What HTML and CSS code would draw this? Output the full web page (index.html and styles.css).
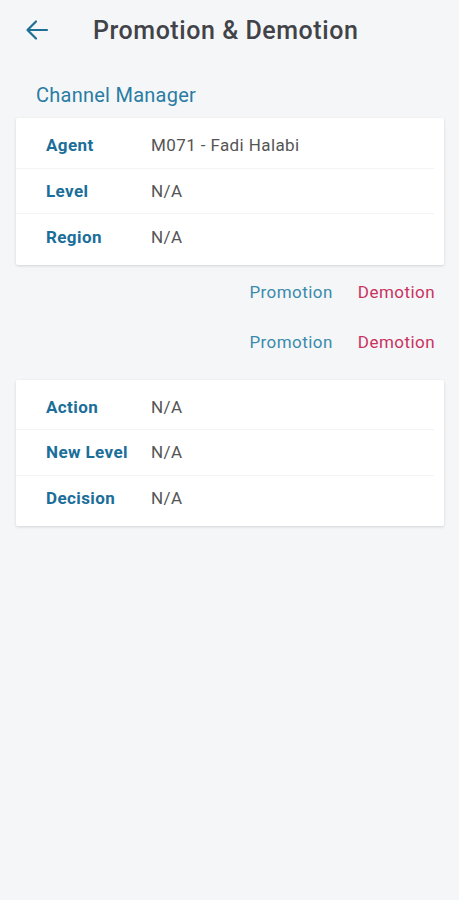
FILE: index.html
```html
<!DOCTYPE html>
<html>
<head>
<meta charset="utf-8">
<link rel="stylesheet" href="styles.css">
</head>
<body>
<div class="app">
  <header class="topbar">
    <svg class="back" width="24" height="24" viewBox="0 0 24 24"><path d="M22 12H3M11 3.5L2.5 12L11 20.5" fill="none" stroke="#1e6f96" stroke-width="2.2" stroke-linecap="round" stroke-linejoin="round"/></svg>
    <h1 class="title">Promotion &amp; Demotion</h1>
  </header>
  <div class="section-title">Channel Manager</div>
  <div class="card">
    <div class="row"><span class="label">Agent</span><span class="value">M071 - Fadi Halabi</span></div>
    <div class="row"><span class="label">Level</span><span class="value">N/A</span></div>
    <div class="row"><span class="label">Region</span><span class="value">N/A</span></div>
  </div>
  <div class="actions">
    <div class="action-row"><span class="btn promo">Promotion</span><span class="btn demo">Demotion</span></div>
    <div class="action-row"><span class="btn promo">Promotion</span><span class="btn demo">Demotion</span></div>
  </div>
  <div class="card">
    <div class="row"><span class="label">Action</span><span class="value">N/A</span></div>
    <div class="row"><span class="label">New Level</span><span class="value">N/A</span></div>
    <div class="row"><span class="label">Decision</span><span class="value">N/A</span></div>
  </div>
</div>
</body>
</html>
```
FILE: styles.css
```css
* { box-sizing: border-box; }
html, body { margin: 0; padding: 0; }
body {
  background: #f5f6f8;
  font-family: Roboto, "Liberation Sans", sans-serif;
  width: 459px;
  height: 900px;
}
.app { padding: 0 15px 0 16px; }
.topbar {
  height: 60px;
  display: flex;
  align-items: center;
}
.back { margin-left: 9px; flex: none; }
.title {
  margin: 0 0 0 44px;
  font-size: 25px;
  font-weight: 500;
  color: #414348;
  letter-spacing: 0.55px;
}
.section-title {
  margin: 22px 0 0 20px;
  font-size: 20px;
  letter-spacing: 0.25px;
  color: #2a7ca3;
  line-height: 26px;
}
.card {
  background: #fff;
  margin-top: 10px;
  padding: 5px 0;
  box-shadow: 0 1px 3px rgba(0,0,0,0.14);
  border-radius: 2px;
}
.row {
  height: 45.5px;
  display: flex;
  align-items: center;
  padding-left: 30px;
  margin: 0 10px 0 0;
  border-bottom: 1px solid #f3f4f5;
}
.row:last-child { border-bottom: none; }
.label {
  width: 105px;
  flex: none;
  font-weight: 700;
  font-size: 17px;
  letter-spacing: 0.4px;
  color: #1a6e99;
}
.value {
  font-size: 17px;
  letter-spacing: 0.4px;
  color: #555;
}
.actions { margin-top: 2px; margin-bottom: 13px; }
.action-row {
  height: 50px;
  display: flex;
  justify-content: flex-end;
  align-items: center;
  gap: 25px;
  padding-right: 9px;
}
.btn { font-size: 17px; letter-spacing: 0.45px; }
.promo { color: #3a8bab; }
.demo { color: #c8335f; }
```
